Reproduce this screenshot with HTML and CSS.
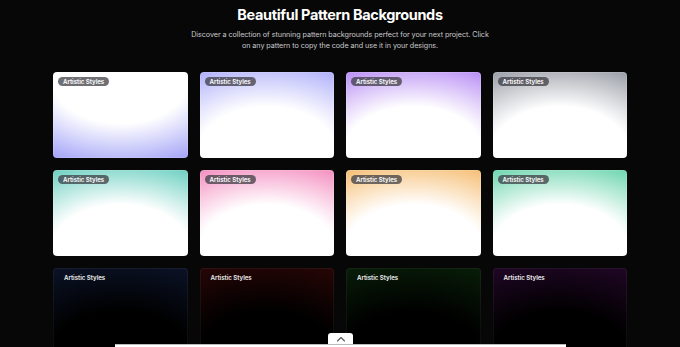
FILE: index.html
```html
<!DOCTYPE html>
<html>
<head>
<meta charset="utf-8">
<link rel="stylesheet" href="styles.css">
</head>
<body>
<main class="page">
  <header class="hero">
    <h1 class="title">Beautiful Pattern Backgrounds</h1>
    <p class="subtitle">Discover a collection of stunning pattern backgrounds perfect for your next project. Click<br>on any pattern to copy the code and use it in your designs.</p>
  </header>
  <section class="grid">
    <div class="card c1"><span class="badge">Artistic Styles</span></div>
    <div class="card c2"><span class="badge">Artistic Styles</span></div>
    <div class="card c3"><span class="badge">Artistic Styles</span></div>
    <div class="card c4"><span class="badge">Artistic Styles</span></div>
    <div class="card c5"><span class="badge">Artistic Styles</span></div>
    <div class="card c6"><span class="badge">Artistic Styles</span></div>
    <div class="card c7"><span class="badge">Artistic Styles</span></div>
    <div class="card c8"><span class="badge">Artistic Styles</span></div>
    <div class="card dark d1"><span class="badge">Artistic Styles</span></div>
    <div class="card dark d2"><span class="badge">Artistic Styles</span></div>
    <div class="card dark d3"><span class="badge">Artistic Styles</span></div>
    <div class="card dark d4"><span class="badge">Artistic Styles</span></div>
  </section>
</main>
<div class="dock">
  <div class="dock-tab">
    <svg width="10" height="6" viewBox="0 0 10 6"><path d="M1.5 5 L5 1.5 L8.5 5" fill="none" stroke="#555" stroke-width="1.1" stroke-linecap="round" stroke-linejoin="round"/></svg>
  </div>
  <div class="dock-line"></div>
</div>
</body>
</html>
```
FILE: styles.css
```css
* { box-sizing: border-box; }
html, body { margin: 0; padding: 0; }
body {
  background: #070707;
  font-family: "Inter", "Open Sans", sans-serif;
  color: #fff;
  height: 347px;
  overflow: hidden;
}
.page {
  width: 574px;
  margin: 0 auto;
  padding-top: 6px;
}
.hero { text-align: center; }
.title {
  margin: 0;
  font-size: 14.5px;
  font-weight: 700;
  letter-spacing: -0.35px;
  line-height: 17px;
}
.subtitle {
  margin: 6px 0 0;
  font-size: 7.2px;
  line-height: 11px;
  color: #c9c9cc;
  letter-spacing: -0.05px;
}
.grid {
  margin-top: 21px;
  display: grid;
  grid-template-columns: repeat(4, 1fr);
  grid-auto-rows: 86px;
  gap: 12px;
}
.card {
  position: relative;
  border-radius: 4px;
  border: 1px solid rgba(255,255,255,0.14);
  overflow: hidden;
  background-origin: border-box;
}
.badge {
  position: absolute;
  top: 4px;
  left: 4px;
  padding: 1px 5px;
  border-radius: 6px;
  background: rgba(55,55,62,0.72);
  font-size: 6.2px;
  font-weight: 600;
  line-height: 7px;
  color: #fff;
  letter-spacing: -0.05px;
}
.c1 { background-image: radial-gradient(125% 125% at 50% 10%, #fff 40%, #7c7cf5 100%); }
.c2 { background-image: radial-gradient(125% 125% at 50% 90%, #fff 40%, #8e8ff8 100%); }
.c3 { background-image: radial-gradient(125% 125% at 50% 90%, #fff 40%, #9b5ff0 100%); }
.c4 { background-image: radial-gradient(125% 125% at 50% 90%, #fff 40%, #6e7480 100%); }
.c5 { background-image: radial-gradient(125% 125% at 50% 90%, #fff 40%, #2fbca7 100%); }
.c6 { background-image: radial-gradient(125% 125% at 50% 90%, #fff 40%, #ef5fa5 100%); }
.c7 { background-image: radial-gradient(125% 125% at 50% 90%, #fff 40%, #f2a33a 100%); }
.c8 { background-image: radial-gradient(125% 125% at 50% 90%, #fff 40%, #2fc48d 100%); }
.dark { border-color: rgba(255,255,255,0.05); }
.dark .badge { background: transparent; left: 5px; color: #eee; }
.d1 { background-image: radial-gradient(125% 125% at 50% 100%, #000 40%, #0e1730 100%); }
.d2 { background-image: radial-gradient(125% 125% at 50% 100%, #000 40%, #300707 100%); }
.d3 { background-image: radial-gradient(125% 125% at 50% 100%, #000 40%, #0a240a 100%); }
.d4 { background-image: radial-gradient(125% 125% at 50% 100%, #000 40%, #28082e 100%); }
.dock {
  position: fixed;
  left: 115px;
  bottom: 0;
  width: 451px;
  height: 14px;
  display: flex;
  flex-direction: column;
  align-items: center;
  justify-content: flex-end;
}
.dock-tab {
  width: 25px;
  height: 11px;
  background: #fff;
  border-radius: 3px 3px 0 0;
  display: flex;
  align-items: center;
  justify-content: center;
}
.dock-line {
  width: 100%;
  height: 3px;
  background: #fff;
  border-top: 1px solid #bbb;
}
```
